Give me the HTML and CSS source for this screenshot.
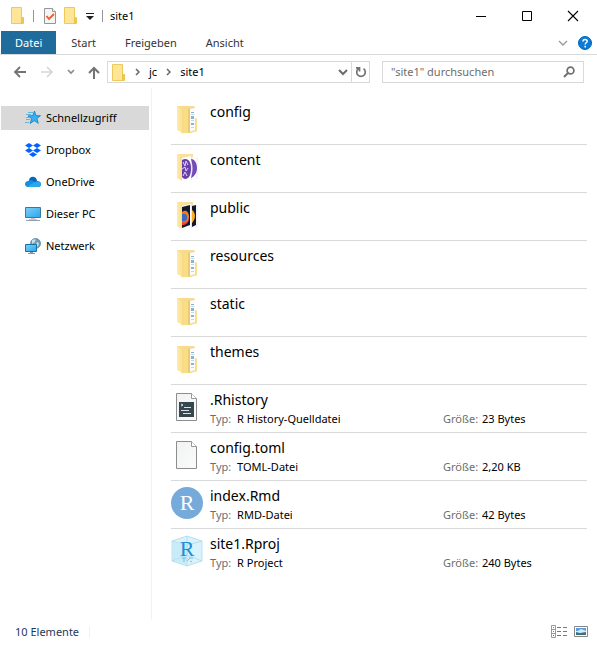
FILE: index.html
```html
<!DOCTYPE html>
<html lang="de">
<head>
<meta charset="utf-8">
<meta name="viewport" content="width=device-width, initial-scale=1">
<title>site1</title>
<link rel="stylesheet" href="styles.css">
</head>
<body>
<svg class="sprite" aria-hidden="true">
  <defs>
    <linearGradient id="sheet" x1="0" y1="0" x2="1" y2="0"><stop offset="0" stop-color="#ffeaa8"/><stop offset="1" stop-color="#fbdf8a"/></linearGradient>
    <linearGradient id="screen" x1="0" y1="0" x2="1" y2="1"><stop offset="0" stop-color="#7fd0f8"/><stop offset="1" stop-color="#2ba5ee"/></linearGradient>
    <linearGradient id="paper" x1="0" y1="0" x2="1" y2="1"><stop offset="0" stop-color="#f1f2f2"/><stop offset="1" stop-color="#fbfbfb"/></linearGradient>
  </defs>
  <symbol id="folder-small" viewBox="0 0 14 17">
    <path d="M.5.500h10v10h2v6H.5z" fill="#ffe596" stroke="#eec95c"/>
    <path d="M10.500 10.500l2 1v4l-2 1z" fill="#f3ca51" stroke="#edc24b"/>
  </symbol>
  <symbol id="folder-large" viewBox="0 0 32 32">
    <path d="M6 3h16l2 1v11l2 1v12l-6 2H10z" fill="#f6db8f"/>
    <path d="M18 6l6-1v22l-6 2z" fill="#fafcfd"/>
    <path d="M20 9h3v1h-3zM20 13h3v3h-3zM20 20h3v2h-3z" fill="#86b4dc"/>
    <path d="M20 11h3v1h-3zM20 17h3v1h-3zM20 24h3v1h-3z" fill="#c8d5df"/>
    <path d="M24 15l2 1v12l-2 1z" fill="#fbdf86"/>
    <path d="M11 7l8-2v24l-8 1z" fill="#f9dd88"/>
    <path d="M17 6l2-1v24l-2 .5z" fill="#edca70"/>
    <path d="M6 3l6 4v23l-6-3z" fill="url(#sheet)"/>
    <path d="M12 7v23" stroke="#f2d27a" stroke-width=".7" fill="none"/>
  </symbol>
  <symbol id="folder-pages" viewBox="0 0 32 32">
    <path d="M6 3h16v3l-11 23-5-2z" fill="#fae09a"/>
    <path d="M11 7l9-2v23l-9 2zM20 7l6-1v21l1 1-7 1z" fill="#fff"/>
    <path d="M20.500 7v22M26 6v22" stroke="#d8dde2" stroke-width=".6"/>
    <path d="M6 3l5 3v24l-5-3z" fill="url(#sheet)"/>
  </symbol>
  <symbol id="folder-content" viewBox="0 0 32 32">
    <use href="#folder-pages"/>
    <path d="M11 9c6-3 9 2 9 8 0 7-2 11-6 11-1 0-2-1-3-2z" fill="#693fae"/>
    <path d="M20 8c4 0 6 5 6 9s-2 8-6 10c2-7 2-12 0-19z" fill="#744bb7"/>
    <path d="M12 11l2 4 1-5 2 4M11 18l3-2 1 4 2-3M12 25l2-4 2 4" stroke="#e1d3f4" fill="none"/>
  </symbol>
  <symbol id="folder-public" viewBox="0 0 32 32">
    <use href="#folder-pages"/>
    <path d="M11 8l8-2v20l-8 3zM21 7l4-1v20l-4 2z" fill="#10182f"/>
    <path d="M11 13c4-3 7 0 7 5s-3 8-7 7z" fill="#f37a1b"/>
    <path d="M11 15c4-1 5 1 5 4s-3 4-5 3z" fill="#376bc1"/>
    <path d="M11 23c3 1 5 0 7-3-1 4-3 6-7 6z" fill="#ef3f3b"/>
    <path d="M21 11c2 1 3 4 3 6s-1 5-3 7z" fill="#f9ad26"/>
  </symbol>
  <symbol id="doc" viewBox="0 0 32 32">
    <path d="M5.500 2.500h15l5 5v22h-20z" fill="url(#paper)" stroke="#8d8d8d"/>
    <path d="M20.500 2.500v5h5" fill="#fff" stroke="#999"/>
  </symbol>
  <symbol id="doc-script" viewBox="0 0 32 32">
    <use href="#doc"/>
    <path d="M8 11h15v15H8z" fill="#37474f"/>
    <path d="M10 13l2 1-2 1M13 16.500h7M10 19.500h8M12 22.500h8" fill="none" stroke="#dce3e6"/>
  </symbol>
  <symbol id="star" viewBox="0 0 16 16">
    <path d="M9.500 1l1.400 4.600 4.600.1-3.600 2.800 1.400 4.800-4-2.600-4.200 2.800 1.500-4.700L3 5.900l4.800-.3z" fill="#36b0f4" stroke="#187fbd" stroke-width=".8"/>
    <path d="M3 2.500h5M1 4.500h5M1 7.500h3M1 9.500h4M0 12.500h4" stroke="#4ba9dc" stroke-width=".8"/>
  </symbol>
  <symbol id="dropbox" viewBox="0 0 16 16">
    <path d="M4 1l4 2.500L4 6 0 3.500zM12 1l4 2.500L12 6 8 3.500zM4 6l4 2.500L4 11 0 8.500zM12 6l4 2.500-4 2.500-4-2.500zM8 10l4 2.500L8 15l-4-2.500z" fill="#0062ff"/>
  </symbol>
  <symbol id="cloud" viewBox="0 0 16 16">
    <path d="M4 7c0-6 8-5 8 0 2 0 4 1 4 3s-1 3-3 3H4c-5 0-5-6 0-6z" fill="#0a65bd"/>
    <path d="M3 7c3-2 6 0 10 4l-9 2C-1 13-1 8 3 7z" fill="#1590df"/>
    <path d="M3 12l7-4c3-1 6 0 6 2s-1 3-3 3H4z" fill="#29a8ec"/>
  </symbol>
  <symbol id="pc" viewBox="0 0 16 16">
    <path d="M.5 1.500h15v10H.5z" fill="url(#screen)" stroke="#357b9f"/>
    <path d="M6 12h4v1h2v1H4v-1h2z" fill="#bdcbd4"/>
    <path d="M1 14.500h14" stroke="#91a0ab"/>
  </symbol>
  <symbol id="network" viewBox="0 0 16 16">
    <circle cx="10.500" cy="5.500" r="5" fill="#6c9fb6" stroke="#4c7d93" stroke-width=".7"/>
    <path d="M7 2c4-2 4 0 3 2l-3 2zM12 4l2 1-1 4-2-2z" fill="#c3dce6"/>
    <path d="M.5 6.500h11v7H.5z" fill="url(#screen)" stroke="#19719d"/>
    <path d="M5 14h3v1H5zM3 15h7v1H3z" fill="#8097a5"/>
  </symbol>
</svg>

<div class="window">
  <header class="titlebar">
    <div class="quick">
      <svg class="mini-folder" aria-hidden="true"><use href="#folder-small"/></svg>
      <span class="tick"></span>
      <button class="plain" aria-label="Eigenschaften"><svg width="12" height="16" viewBox="0 0 12 16"><path d="M.5.500h8l3 3v12H.5z" fill="#f4f5f5" stroke="#969696"/><path d="M8.500.500v3h3" fill="#fff" stroke="#999"/><path d="M2.500 8l2.500 3 5-5" fill="none" stroke="#f05a24" stroke-width="1.800"/></svg></button>
      <button class="plain" aria-label="Neuer Ordner"><svg class="mini-folder"><use href="#folder-small"/></svg></button>
      <button class="plain" aria-label="Symbolleiste anpassen"><svg width="8" height="8" viewBox="0 0 8 8"><path d="M0 1h8v1H0zM0 4h8L4 8z" fill="#222"/></svg></button>
      <span class="tick"></span>
    </div>
    <h1 class="title">site1</h1>
    <div class="controls">
      <button aria-label="Minimieren"><svg width="12" height="12"><path d="M1 6.500h10" stroke="#000"/></svg></button>
      <button aria-label="Maximieren"><svg width="12" height="12"><path d="M1.500 1.500h9v9h-9z" fill="none" stroke="#000"/></svg></button>
      <button aria-label="Schließen"><svg width="12" height="12"><path d="M1 1l10 10M11 1L1 11" stroke="#000" stroke-width="1.100"/></svg></button>
    </div>
  </header>

  <nav class="ribbon" aria-label="Menüband">
    <button class="tab tab-file">Datei</button>
    <button class="tab">Start</button>
    <button class="tab">Freigeben</button>
    <button class="tab">Ansicht</button>
    <div class="ribbon-end">
      <button class="plain" aria-label="Menüband erweitern"><svg width="10" height="6"><path d="M1 1l4 4 4-4" fill="none" stroke="#999" stroke-width="1.300"/></svg></button>
      <button class="plain" aria-label="Hilfe"><svg width="14" height="14"><circle cx="7" cy="7" r="6.500" fill="#0b7ad8" stroke="#0565b6"/><path d="M5 5.500C5 2.800 9.200 3 9.200 5.300 9.200 6.800 7.200 6.800 7.200 8.500M7.200 9.800v1.600" fill="none" stroke="#fff" stroke-width="1.500"/></svg></button>
    </div>
  </nav>

  <div class="location">
    <div class="moves">
      <button class="plain" aria-label="Zurück"><svg width="14" height="12"><path d="M13 6H2M7 1L2 6l5 5" fill="none" stroke="#737373" stroke-width="1.800"/></svg></button>
      <button class="plain" aria-label="Vorwärts"><svg width="14" height="12"><path d="M1 6h11M7 1l5 5-5 5" fill="none" stroke="#d6d6d6" stroke-width="1.600"/></svg></button>
      <button class="plain" aria-label="Verlauf"><svg width="8" height="6"><path d="M1 1l3 3 3-3" fill="none" stroke="#888" stroke-width="1.600"/></svg></button>
      <button class="plain" aria-label="Nach oben"><svg width="12" height="13"><path d="M6 13V2M1 7l5-5 5 5" fill="none" stroke="#737373" stroke-width="2"/></svg></button>
    </div>
    <div class="address">
      <svg class="mini-folder" aria-hidden="true"><use href="#folder-small"/></svg>
      <svg class="crumb-arrow" viewBox="0 0 5 8"><path d="M1 1l3 3-3 3" fill="none" stroke="#666" stroke-width="1.500"/></svg>
      <a class="crumb" href="#">jc</a>
      <svg class="crumb-arrow" viewBox="0 0 5 8"><path d="M1 1l3 3-3 3" fill="none" stroke="#666" stroke-width="1.500"/></svg>
      <a class="crumb" href="#">site1</a>
      <div class="address-end">
        <button class="plain drop" aria-label="Vorherige Orte"><svg width="10" height="7"><path d="M1 1l4 4 4-4" fill="none" stroke="#6c6c6c" stroke-width="2"/></svg></button>
        <button class="plain refresh" aria-label="Aktualisieren"><svg width="12" height="12"><path d="M8.500 2.600A4.300 4.300 0 1 1 3.500 2.600M1 1.800H4.500V5.500" fill="none" stroke="#737373" stroke-width="1.700"/></svg></button>
      </div>
    </div>
    <label class="search">
      <input type="search" aria-label="site1 durchsuchen" placeholder="&quot;site1&quot; durchsuchen">
      <svg width="12" height="12"><circle cx="7.500" cy="4.500" r="3.400" fill="none" stroke="#707070" stroke-width="1.700"/><path d="M5 7L1 11" stroke="#707070" stroke-width="2"/></svg>
    </label>
  </div>

  <div class="body">
    <nav class="sidebar" aria-label="Navigationsbereich">
      <a class="place current" href="#"><svg><use href="#star"/></svg>Schnellzugriff</a>
      <a class="place" href="#"><svg><use href="#dropbox"/></svg>Dropbox</a>
      <a class="place" href="#"><svg><use href="#cloud"/></svg>OneDrive</a>
      <a class="place" href="#"><svg><use href="#pc"/></svg>Dieser PC</a>
      <a class="place" href="#"><svg><use href="#network"/></svg>Netzwerk</a>
    </nav>
    <main>
      <ul class="files">
        <li><svg><use href="#folder-large"/></svg><span class="name">config</span></li>
        <li><svg><use href="#folder-content"/></svg><span class="name">content</span></li>
        <li><svg><use href="#folder-public"/></svg><span class="name">public</span></li>
        <li><svg><use href="#folder-large"/></svg><span class="name">resources</span></li>
        <li><svg><use href="#folder-large"/></svg><span class="name">static</span></li>
        <li><svg><use href="#folder-large"/></svg><span class="name">themes</span></li>
        <li><svg><use href="#doc-script"/></svg><span class="name">.Rhistory</span><span class="type"><span class="key">Typ:</span> R History-Quelldatei</span><span class="size"><span class="key">Größe:</span> 23 Bytes</span></li>
        <li><svg><use href="#doc"/></svg><span class="name">config.toml</span><span class="type"><span class="key">Typ:</span> TOML-Datei</span><span class="size"><span class="key">Größe:</span> 2,20 KB</span></li>
        <li>
          <svg viewBox="0 0 32 32">
            <circle cx="16" cy="16" r="16" fill="#75aadb"/>
            <text class="r-mark r-white" x="16" y="23" text-anchor="middle">R</text>
          </svg>
          <span class="name">index.Rmd</span><span class="type"><span class="key">Typ:</span> RMD-Datei</span><span class="size"><span class="key">Größe:</span> 42 Bytes</span>
        </li>
        <li>
          <svg viewBox="0 0 32 32">
            <path d="M16 1l15 5v20l-15 5-15-5V6z" fill="#d9f2fb" stroke="#a9dcea" stroke-width=".8"/>
            <path d="M1 6l15 4 15-4M16 10v21M1 26l15-6 15 6M16 1v19" fill="none" stroke="#a9d9e5" stroke-width=".7"/>
            <path d="M2 7l14 4v19L2 25z" fill="#b6e5f6" opacity=".5"/>
            <text class="r-mark r-blue" x="16" y="21" text-anchor="middle">R</text>
            <path d="M11 23h4M18 23h4M13 23v4M16 26l3-3M19 26l2 1" stroke="#74bfe4" fill="none"/>
          </svg>
          <span class="name">site1.Rproj</span><span class="type"><span class="key">Typ:</span> R Project</span><span class="size"><span class="key">Größe:</span> 240 Bytes</span>
        </li>
      </ul>
    </main>
  </div>

  <footer class="status">
    <span class="count">10 Elemente</span>
    <div class="views">
      <button class="plain" aria-label="Details"><svg width="17" height="13"><path d="M.5.500h4v12h-4zM.5 4.500h4M.5 8.500h4" fill="#fff" stroke="#999"/><path d="M6 2.500h4M12 2.500h4M6 6.500h4M12 6.500h4M6 10.500h4M12 10.500h4" stroke="#777"/><path d="M2 2h1v1H2zM2 6h1v1H2z" fill="#4d8fd0"/><path d="M2 10h1v1H2z" fill="#c33"/></svg></button>
      <button class="plain" aria-label="Große Symbole"><svg width="14" height="11"><path d="M.5.500h13v10H.5z" fill="#fff" stroke="#888"/><path d="M2 2h10v7H2z" fill="#5a9ee8"/><path d="M4 5l3-2 5 2v2H2V5z" fill="#d9edf8"/><path d="M2 6l4 1 6-1v3H2z" fill="#3d7280"/></svg></button>
    </div>
  </footer>
</div>
</body>
</html>
```
FILE: styles.css
```css
* {
  box-sizing: border-box;
}

body {
  margin: 0;
  background: #fff;
  color: #000;
  font: 11px/16px "Noto Sans", "Open Sans", sans-serif;
}

svg {
  display: block;
  flex: none;
}

a {
  color: inherit;
  text-decoration: none;
}

button,
input {
  margin: 0;
  padding: 0;
  border: 0;
  background: none;
  color: inherit;
  font: inherit;
}

.sprite {
  position: absolute;
  width: 0;
  height: 0;
}

.window {
  display: flex;
  flex-direction: column;
  min-height: 100vh;
}

.mini-folder {
  width: 14px;
  height: 17px;
}

.titlebar {
  display: flex;
  align-items: center;
  height: 31px;
  padding-right: 1px;
}

.quick {
  display: flex;
  align-items: center;
  gap: 8px;
  padding: 0 7px 0 11px;
}

.tick {
  width: 1px;
  height: 12px;
  background: #999;
}

.quick .tick:nth-child(2) {
  margin-right: 2px;
}

.title {
  flex: 1;
  margin: 0;
  font-size: 11px;
  font-weight: 400;
}

.controls {
  display: flex;
}

.controls button {
  display: grid;
  place-items: center;
  width: 46px;
  height: 31px;
}

.ribbon {
  display: flex;
  gap: 1px;
  height: 24px;
  padding: 0 5px 0 1px;
  border-bottom: 1px solid #dadbdc;
}

.tab {
  padding: 0 14px;
  color: #333;
}

.tab-file {
  background: #1f6c9c;
  color: #fff;
}

.ribbon-end {
  display: flex;
  align-items: center;
  gap: 10px;
  margin-left: auto;
}

.location {
  display: flex;
  align-items: center;
  padding: 6px 13px 5px;
}

.moves {
  display: flex;
  flex: none;
  align-items: center;
  justify-content: space-between;
  width: 87px;
  margin-right: 7px;
}

.address {
  display: flex;
  flex: 1 1 263px;
  align-items: center;
  gap: 9px;
  height: 22px;
  padding-left: 4px;
  border: 1px solid #d9d9d9;
}

.crumb-arrow {
  width: 5px;
  height: 8px;
}

.address-end {
  display: flex;
  align-self: stretch;
  margin-left: auto;
}

.address-end .plain {
  display: grid;
  place-items: center;
  width: 16px;
}

.address-end .refresh {
  width: 18px;
  border-left: 1px solid #d9d9d9;
}

.search {
  display: flex;
  flex: 1 1 202px;
  align-items: center;
  height: 22px;
  margin-left: 12px;
  padding: 0 8px;
  border: 1px solid #d9d9d9;
}

.search input {
  flex: 1;
  min-width: 0;
  outline: 0;
}

.search input::placeholder {
  color: #6d6d6d;
  opacity: 1;
}

.body {
  display: flex;
  flex: 1;
}

.sidebar {
  display: flex;
  flex: none;
  flex-direction: column;
  gap: 8px;
  width: 152px;
  padding: 18px 2px 0 1px;
  border-right: 1px solid #f2f2f2;
}

.place {
  display: flex;
  align-items: center;
  gap: 5px;
  height: 24px;
  padding-left: 24px;
}

.place svg {
  width: 16px;
  height: 16px;
}

.place.current {
  background: #d9d9d9;
}

main {
  flex: 1;
  padding: 9px 10px 0 19px;
}

.files {
  margin: 0;
  padding: 0;
  list-style: none;
}

.files li {
  display: grid;
  grid-template-columns: 32px 1fr 144px;
  grid-template-rows: 20px 18px;
  column-gap: 7px;
  height: 48px;
  padding-top: 5px;
  border-bottom: 1px solid #d9d9d9;
}

.files li:last-child {
  border-bottom: 0;
}

.files svg {
  grid-row: 1 / 3;
  width: 32px;
  height: 32px;
  margin-top: 1px;
}

.name {
  grid-column: 2 / 4;
  font-size: 14px;
  line-height: 20px;
}

.type,
.size {
  line-height: 18px;
}

.type {
  grid-column: 2;
}

.size {
  grid-column: 3;
}

.key {
  margin-right: 1px;
  color: #6d6d6d;
}

.type .key {
  margin-right: 3px;
}

.r-mark {
  font-family: "Liberation Serif", serif;
  font-size: 22px;
}

.r-white {
  fill: #fff;
}

.r-blue {
  fill: #218dda;
}

.status {
  display: flex;
  align-items: center;
  justify-content: space-between;
  height: 25px;
  padding: 0 9px 2px 15px;
  color: #1e395b;
}

.count {
  padding-right: 10px;
  border-right: 1px solid #f0f0f0;
  line-height: 12px;
}

.views {
  display: flex;
  align-items: center;
  gap: 6px;
}
```
